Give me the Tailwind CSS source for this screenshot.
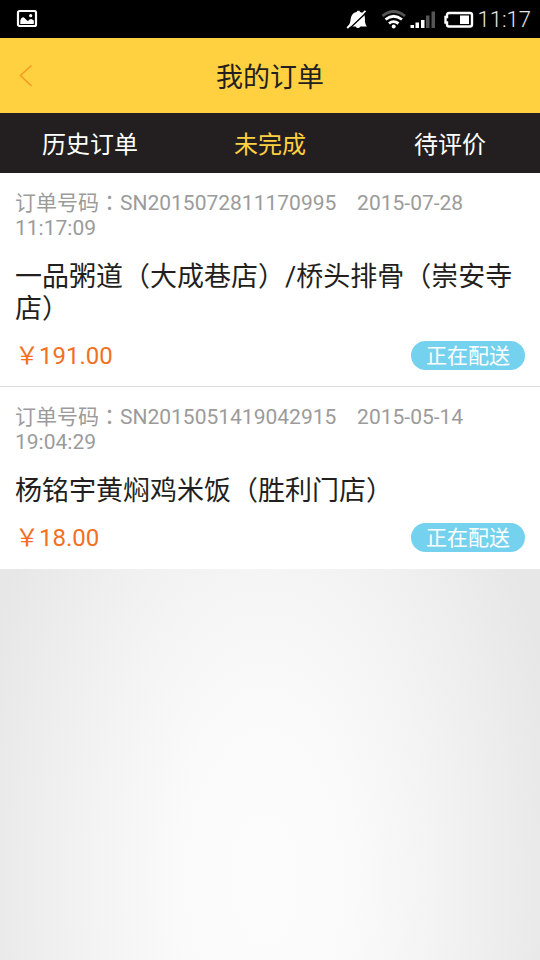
<!DOCTYPE html>
<html lang="zh-CN">
<head>
<meta charset="utf-8">
<meta name="viewport" content="width=device-width, initial-scale=1">
<title>我的订单</title>
<script src="https://cdn.jsdelivr.net/npm/@tailwindcss/browser@4"></script>
</head>
<body class="flex min-h-screen flex-col bg-[#e8e8e8] font-[Roboto,'Noto_Sans_CJK_SC',sans-serif] text-[#231f20]">
  <div class="flex h-[38px] items-center justify-between bg-black pl-4 pr-[9px]">
    <svg class="h-5 w-6" viewBox="0 0 24 20" fill="none" aria-hidden="true">
      <rect x="2" y="2" width="18" height="15" rx="1.500" stroke="#fff" stroke-width="2.200"/>
      <path d="M4.300 15V11.500Q5.500 7.500 8 8.500L11 11.500Q12.500 12.500 13.500 10.500Q15.500 9 17.800 11.500V15Z" fill="#fff"/>
      <circle cx="14.700" cy="6.700" r="1.600" fill="#fff"/>
    </svg>
    <div class="flex items-center pt-0.5">
      <svg class="h-6 w-[130px]" viewBox="-1 0 130 24" fill="none" aria-hidden="true">
        <path d="M2.500 18.500C6 16 5 11.500 6.500 8Q8 4.500 11.500 4L12.500 2.800H14.500L15 4Q18.500 4.500 19.500 7.500C20.500 11 19 15 22 18.500H15.500Q13 21.500 10.500 18.500Z" fill="#fff"/>
        <path d="M4 21L22.500 3.500" stroke="#000" stroke-width="1.500"/>
        <path d="M2.200 20L20.500 2.800" stroke="#fff" stroke-width="1.800"/>
        <path d="M37.500 8Q48.500 -1 60 8" stroke="#555" stroke-width="2.800"/>
        <path d="M40.500 11.500Q48.500 5 57 11.500M44 15.500Q48.500 11.800 53.500 15.500" stroke="#fff" stroke-width="2.800"/>
        <circle cx="48.700" cy="18.500" r="2" fill="#fff"/>
        <path d="M65.500 17H69V20H65.500ZM70.500 14.500H74V20H70.500ZM76 12H79.500V20H76Z" fill="#fff"/>
        <path d="M81 7.500H84.500V20H81ZM86.500 3.500H90V20H86.500Z" fill="#555"/>
        <path d="M104 5H125Q127 5 127 7V16.500Q127 18.500 125 18.500H104Q102 18.500 102 16.500V14.500H100.500V9H102V7Q102 5 104 5Z" stroke="#fff" stroke-width="2.400"/>
        <rect x="115" y="7.500" width="9" height="8.500" fill="#fff"/>
      </svg>
      <span class="pl-1 text-[22px] font-light leading-6 text-[#e6e6e6]">11:17</span>
    </div>
  </div>

  <header class="grid h-[75px] grid-cols-[64px_1fr_64px] items-center bg-[#ffd03f]">
    <button type="button" aria-label="返回" class="flex h-full items-center pl-[18px]">
      <svg class="h-6 w-4" viewBox="0 0 16 24" fill="none" aria-hidden="true">
        <path d="M13.500 1.500L2.500 11.500L13.500 22" stroke="#f39c23" stroke-width="1.600"/>
      </svg>
    </button>
    <h1 class="pt-1 text-center text-[27px] leading-8">我的订单</h1>
  </header>

  <nav class="grid h-[60px] grid-cols-3 bg-[#231f20] text-[24px] leading-8 text-white">
    <a href="#history" class="flex items-center justify-center pt-1">历史订单</a>
    <a href="#pending" aria-current="page" class="flex items-center justify-center pt-1 text-[#ffd03f]">未完成</a>
    <a href="#review" class="flex items-center justify-center pt-1">待评价</a>
  </nav>

  <main class="flex flex-1 flex-col">
    <ul class="bg-white">
      <li class="border-b border-[#dcdcdc] px-[15px] pb-4 pt-[18px]">
        <p lang="zh-TW" class="font-[Roboto,'Noto_Sans_CJK_TC',sans-serif] text-[21px] leading-[25px] text-[#9b9b9b]">订单号码：SN2015072811170995&nbsp;&nbsp;&nbsp; 2015-07-28 11:17:09</p>
        <h2 class="mt-5 text-[27px] leading-8">一品粥道（大成巷店）/桥头排骨（崇安寺店）</h2>
        <div class="mt-4 flex items-center justify-between">
          <span class="pt-0.5 text-[24px] leading-[27px] text-[#f37022]">￥191.00</span>
          <span class="rounded-full bg-[#75d2ee] px-[15px] pt-0.5 text-[21px] leading-[27px] text-white">正在配送</span>
        </div>
      </li>
      <li class="border-b border-white px-[15px] pb-4 pt-[18px]">
        <p lang="zh-TW" class="font-[Roboto,'Noto_Sans_CJK_TC',sans-serif] text-[21px] leading-[25px] text-[#9b9b9b]">订单号码：SN2015051419042915&nbsp;&nbsp;&nbsp; 2015-05-14 19:04:29</p>
        <h2 class="mt-5 text-[27px] leading-8">杨铭宇黄焖鸡米饭（胜利门店）</h2>
        <div class="mt-4 flex items-center justify-between">
          <span class="pt-0.5 text-[24px] leading-[27px] text-[#f37022]">￥18.00</span>
          <span class="rounded-full bg-[#75d2ee] px-[15px] pt-0.5 text-[21px] leading-[27px] text-white">正在配送</span>
        </div>
      </li>
    </ul>
    <div class="flex-1 bg-[radial-gradient(55%_150%_at_49%_80%,#fcfcfc_0%,#fafafa_30%,#f4f4f4_55%,#ededed_80%,#e7e7e7_100%)]"></div>
  </main>
</body>
</html>
